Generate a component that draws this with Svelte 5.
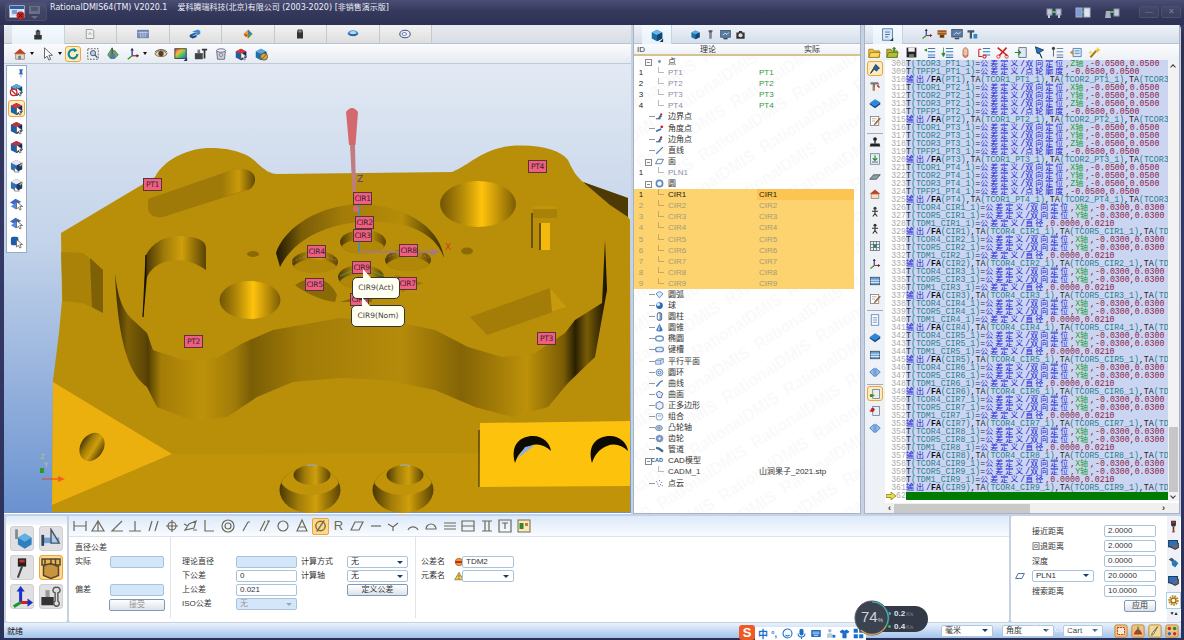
<script>
  // small 16x16 icon set, drawn by hand
  const cube = (a, b, c) =>
    `<path d="M2 5l6-3 6 3v7l-6 3-6-3z" fill="${b}"/><path d="M2 5l6 3 6-3-6-3z" fill="${a}"/><path d="M8 8v7l6-3V5z" fill="${c}"/>`;
  const cursor = `<path d="M8 6v8l2-2 1.500 3 1.500-.8-1.500-3h3z" fill="#fff" stroke="#555" stroke-width=".8"/>`;
  const blue = cube("#5aa9dc", "#1f6fa8", "#13466f");
  const icons = {
    tabProbe: `<rect x="5" y="2" width="6" height="6" fill="#555"/><path d="M3 8h10v6H3z" fill="#333"/><path d="M7 1h2v3H7z" fill="#222"/>`,
    tabDoc: `<path d="M3 2h8l2 2v10H3z" fill="#eee" stroke="#888"/><path d="M6 9l2-3 2 3" stroke="#999" fill="none"/>`,
    tabTable: `<rect x="1" y="3" width="14" height="10" fill="#7f94c4" stroke="#5468a0"/><path d="M5 5v8M8 5v8M11 5v8M1 6h14" stroke="#dfe6f5" stroke-width=".7"/>`,
    tabStack: `<path d="M1 9l7-3 3 1-7 4z" fill="#1c64b0"/><path d="M4 5l8-3 3 2v4l-5 2V6z" fill="#3c8ad0"/><path d="M1 9v3l4 2 5-2V9L5 11z" fill="#124a8a"/>`,
    tabColor: `<path d="M8 2l6 6-6 6-6-6z" fill="#e0a020"/><path d="M8 2l6 6-6 1z" fill="#2a7fd0"/><path d="M2 8l6 1-3 3z" fill="#d03a30"/><path d="M8 9l6-1-6 6z" fill="#40a040"/>`,
    tabDark: `<path d="M5 2h6l1 4v8H4V6z" fill="#333"/><rect x="6" y="3" width="4" height="3" fill="#888"/>`,
    tabDish: `<ellipse cx="8" cy="7" rx="7" ry="4" fill="#4a90d8"/><path d="M1 7c1 5 13 5 14 0-3 2-11 2-14 0z" fill="#2a5f9f"/><ellipse cx="8" cy="6" rx="4" ry="2" fill="#b8d8f0"/>`,
    tabRing: `<ellipse cx="8" cy="8" rx="7" ry="5" fill="#eef" stroke="#445a88" stroke-width="1.500"/><ellipse cx="7" cy="8" rx="3" ry="2" fill="#fff" stroke="#445a88"/>`,
    home: `<path d="M1 8l7-6 7 6z" fill="#c83c20"/><path d="M3 8h10v6H3z" fill="#eed9b8" stroke="#987"/><rect x="6" y="10" width="3" height="4" fill="#5a7fb0"/>`,
    arrow: `<path d="M4 1v12l3-2.500 2 4.500 2-1-2-4.500h4z" fill="#fff" stroke="#555"/>`,
    rotate: `<path d="M13 8a5 5 0 1 1-2-4" fill="none" stroke="#0e8a9a" stroke-width="2.500"/><path d="M9 1l4 3-4 2z" fill="#0e8a9a"/>`,
    zoomBox: `<rect x="2" y="2" width="12" height="12" fill="none" stroke="#555" stroke-dasharray="2 1.500"/><circle cx="8" cy="7" r="3" fill="#bcd" stroke="#456"/><path d="M10 9l3 3" stroke="#456" stroke-width="1.500"/>`,
    solidFit: `<path d="M7 1l1 3h2l4 5-4 4H5L2 9l3-5z" fill="#7aa060" stroke="#486"/><path d="M7 1v7" stroke="#333"/><rect x="5" y="8" width="5" height="5" fill="#4a78b8"/>`,
    axes: `<path d="M7 2v8" stroke="#2030c0" stroke-width="1.500"/><path d="M7 10h7" stroke="#d02020" stroke-width="1.500"/><path d="M7 10l-5 4" stroke="#20a020" stroke-width="1.500"/><path d="M7 1l-2 3h4zM15 10l-3-2v4z" fill="#333"/>`,
    eye: `<path d="M1 8c3-5 11-5 14 0-3 4-11 4-14 0z" fill="#e8d8b0" stroke="#664"/><circle cx="8" cy="7.500" r="3" fill="#5a3a20"/><path d="M1 6c3-4 11-4 14 0" stroke="#432" fill="none"/>`,
    palette: `<rect x="1" y="2" width="13" height="11" fill="url(#rainbow)" stroke="#333"/><path d="M15 16h-4l4-4z" fill="#135"/>`,
    camT: `<path d="M1 7h9v7H1z" fill="#444"/><path d="M4 3h3v4H4z" fill="#777"/><path d="M9 2h6v2h-2v9h-2V4H9z" fill="#333"/>`,
    bin: `<path d="M3 4h10l-1 10H4z" fill="#ccd" stroke="#667"/><ellipse cx="8" cy="4" rx="5" ry="2" fill="#eef" stroke="#667"/><circle cx="8" cy="9" r="2" fill="none" stroke="#889"/>`,
    cubeRed: cube("#e03030", "#1f5fa0", "#102a60") + cursor,
    cubeTool: cube("#5aa9dc", "#1f6fa8", "#13466f") + `<circle cx="11.500" cy="11" r="4" fill="#d0a840" stroke="#754"/><path d="M9 14l6-7" stroke="#754"/>`,
    noCube: blue + cursor + `<circle cx="5" cy="11" r="3.500" fill="#fff" stroke="#d02020" stroke-width="1.400"/><path d="M3 9l4 4" stroke="#d02020" stroke-width="1.400"/>`,
    cubeB: cube("#c03040", "#1f5fa0", "#102a60") + cursor,
    cubeW: cube("#e8e8f0", "#2f6fb8", "#1a3a70") + `<path d="M6 10v5h5l-2-2z" fill="#fff" stroke="#444" stroke-width=".6"/><path d="M11 8l3-3 1 1-3 3z" fill="#e0b040"/>`,
    plates: `<path d="M1 7l6-4 6 3-6 4z" fill="#3a6ac0"/><path d="M2 11l6-4 5 3-6 4z" fill="#5a88d8"/>` + cursor,
    cubeD: `<rect x="2" y="3" width="8" height="9" fill="#1a5ea8" rx="2"/>` + cursor,
    pin: `<path d="M5 2h6v1l-1 1v4l2 2H4l2-2V4L5 3zM7.500 10h1v5h-1z" fill="#2a6cb8"/>`,
    bigCube: `<path d="M2 5l6-3 6 3v7l-6 3-6-3z" fill="#1d6ea8"/><path d="M2 5l6 3 6-3-6-3z" fill="#6fb6e2"/><path d="M8 8v7l6-3V5z" fill="#0f4777"/><path d="M15 16h-4l4-4z" fill="#234"/>`,
    cubeS: blue,
    tool: `<path d="M4 2h8l-2 3v9H6V5z" fill="#889"/><rect x="6" y="2" width="4" height="3" fill="#555"/>`,
    screen: `<rect x="1" y="2" width="14" height="10" fill="#5a7aa8" stroke="#345"/><path d="M4 9l3-3 3 2 3-3" stroke="#fff" fill="none"/><path d="M5 14h6" stroke="#345" stroke-width="2"/>`,
    camera: `<path d="M2 5h3l1-2h4l1 2h3v9H2z" fill="#333"/><circle cx="8" cy="9" r="3" fill="#ddd"/>`,
    board: `<rect x="2" y="1" width="12" height="14" fill="#dfe8f5" stroke="#3a6ea8"/><path d="M5 5h6M5 8h6M5 11h4" stroke="#1f5fa0"/><path d="M15 16h-4l4-4z" fill="#135"/>`,
    chest: `<path d="M2 3h12v6H2z" fill="#a05a20"/><path d="M5 9h6v4H5z" fill="#6a3a14"/><path d="M2 6h12" stroke="#e0a040"/>`,
    tee: `<path d="M2 3h9v3H8v8H5V6H2z" fill="#456"/><rect x="10" y="8" width="5" height="6" fill="#2a8ac8"/>`,
    open: `<path d="M1 4h5l1 2h7v8H1z" fill="#f4c040" stroke="#a07810"/><path d="M3 8h12l-2 6H1z" fill="#fbd860" stroke="#a07810"/>`,
    openG: `<path d="M1 4h5l1 2h7v8H1z" fill="#c8b030" stroke="#7a6810"/><path d="M3 8h12l-2 6H1z" fill="#a8c040" stroke="#6a7810"/><path d="M10 1l3 3h-2v3H9V4H7z" fill="#3a8a2a"/>`,
    save: `<rect x="2" y="2" width="12" height="12" fill="#222"/><rect x="4" y="2" width="8" height="5" fill="#eee"/><rect x="5" y="10" width="6" height="4" fill="#777"/>`,
    listL: `<path d="M6 3h9M6 7h9M6 11h9M6 14h9" stroke="#3a78b8" stroke-width="1.300"/><path d="M1 5l4-2v4z" fill="#2a8a2a"/>`,
    listD: `<path d="M6 3h9M6 7h9M6 11h9M6 14h9" stroke="#3a78b8" stroke-width="1.300"/><path d="M3 2v9M1 9l2 4 2-4z" fill="#2a8a2a" stroke="#2a8a2a"/>`,
    hand: `<path d="M5 6c0-5 6-5 6 0v5c0 4-6 4-6 0z" fill="#f0c0a8" stroke="#a06040"/><path d="M5 11c1 2 5 2 6 0" stroke="#c04040" fill="none"/>`,
    listR: `<path d="M6 3h9M6 7h9M6 11h9" stroke="#3a78b8" stroke-width="1.300"/><path d="M1 4h3M1 4v9h4" stroke="#d02020" fill="none" stroke-width="1.300"/><circle cx="8" cy="13" r="2" fill="none" stroke="#d02020" stroke-width="1.300"/>`,
    cutX: `<path d="M2 2l12 10M13 2L4 12" stroke="#d02020" stroke-width="2"/><circle cx="3" cy="13" r="2" fill="none" stroke="#d02020"/><circle cx="13" cy="13" r="2" fill="none" stroke="#d02020"/>`,
    importBox: `<rect x="6" y="2" width="9" height="12" fill="#dfe8f5" stroke="#567"/><path d="M1 8h7M5 5l3 3-3 3" stroke="#2a8a2a" fill="none" stroke-width="1.500"/>`,
    flag: `<path d="M3 1l10 4-5 3 3 7-3-6-3 0z" fill="#2a70c8" stroke="#134"/>`,
    listG: `<path d="M7 3h8M7 7h8M7 11h8M7 14h8" stroke="#6a88a8" stroke-width="1.300"/><circle cx="3" cy="3" r="2" fill="#444"/><path d="M3 5v8" stroke="#444"/>`,
    layers: `<path d="M5 3h10v10H5z" fill="#dfe8f5" stroke="#3a78b8"/><path d="M7 6h6M7 9h6" stroke="#3a78b8"/><path d="M1 8l4-3v6z" fill="#e08020"/>`,
    wand: `<path d="M3 14l7-8" stroke="#a07810" stroke-width="2.500"/><path d="M12 1l1 3 3 1-3 1-1 3-1-3-3-1 3-1z" fill="#f4c020"/><path d="M3 5l1 2 2 1-2 1-1 2-1-2-2-1 2-1z" fill="#f8d860"/>`,
    pinB: `<path d="M9 2l5 5-2 1-2 3-3-3-5 6 4-7 1-2z" fill="#1c62b8" stroke="#123"/>`,
    hammer: `<path d="M2 3h10l2 3H8v8H5V6H2z" fill="#777"/><path d="M5 9h3v5H5z" fill="#c08040"/><path d="M11 7l3 3" stroke="#d02020" stroke-width="2"/>`,
    book: `<path d="M1 8l7-5 7 4-7 5z" fill="#2a88d8"/><path d="M1 8v2l7 5 7-5V7l-7 5z" fill="#134f90"/>`,
    note: `<rect x="2" y="2" width="11" height="12" fill="#fff" stroke="#777"/><path d="M4 5h6M4 8h4" stroke="#999"/><path d="M8 11l6-7 1 1-6 7-2 1z" fill="#e08020" stroke="#853"/>`,
    joy: `<circle cx="8" cy="4" r="2.500" fill="#222"/><path d="M7 5h2v5H7z" fill="#333"/><path d="M2 10h12l1 4H1z" fill="#222"/>`,
    dl: `<rect x="2" y="1" width="12" height="14" fill="#e8eef8" stroke="#678"/><path d="M8 3v7M5 7l3 3 3-3" stroke="#2a8a2a" fill="none" stroke-width="1.500"/><path d="M4 12h8" stroke="#345"/>`,
    plane: `<path d="M1 11l5-6h9l-5 6z" fill="#8aa0a0" stroke="#445"/>`,
    house: `<path d="M1 8l7-6 7 6z" fill="#c83c20"/><path d="M3 8h10v6H3z" fill="#f0e0c0" stroke="#976"/>`,
    walk: `<circle cx="8" cy="3" r="2" fill="#333"/><path d="M8 5v5l-3 4M8 10l3 4M4 7l8 0" stroke="#333" stroke-width="1.500" fill="none"/>`,
    grid: `<rect x="2" y="2" width="12" height="12" fill="#e8eef8" stroke="#567"/><path d="M2 6h12M2 10h12M6 2v12M10 2v12" stroke="#567"/><rect x="6" y="6" width="4" height="4" fill="#2a8a2a"/>`,
    stackB: `<rect x="2" y="3" width="12" height="10" fill="#6aa0d8" stroke="#345"/><path d="M2 7h12M2 10h12" stroke="#fff"/>`,
    pageB: `<rect x="3" y="1" width="10" height="14" fill="#fff" stroke="#4a78b8"/><path d="M5 5h6M5 8h6M5 11h6" stroke="#4a78b8"/>`,
    redPage: `<rect x="5" y="2" width="9" height="12" fill="#e8eef4" stroke="#678"/><path d="M1 8h5" stroke="#d02020" stroke-width="2"/><circle cx="5" cy="6" r="2.500" fill="#c02030"/>`,
    greenPage: `<rect x="5" y="2" width="9" height="12" fill="#e8eef4" stroke="#678"/><path d="M2 10h5" stroke="#2a8a2a" stroke-width="2"/><circle cx="3" cy="10" r="2" fill="#2a8a2a"/>`,
    mirror: `<path d="M7 3v11L1 8zM9 3v11l6-6z" fill="#9ab8e0" stroke="#2a70c8"/>`,
    probeTool: `<path d="M5 1h6v5l-1 2H6L5 6z" fill="#333"/><path d="M7 8h2v5H7z" fill="#444"/><circle cx="8" cy="14" r="1.500" fill="#d02020"/><rect x="6" y="2" width="4" height="2" fill="#d02020"/>`,
    axisBig: `<path d="M7 3v9" stroke="#1a30c8" stroke-width="2.200"/><path d="M7 12h7" stroke="#d02020" stroke-width="2.200"/><path d="M7 12l-5 3" stroke="#1a9a2a" stroke-width="2.200"/><path d="M7 0l-3 4h6zM16 12l-4-3v6z" fill="#1a30c8"/>`,
    squareTool: `<path d="M2 7h12v4H2z" fill="#6fa0d8"/><path d="M8 1l6 10H8z" fill="#b0cce8" stroke="#456"/><path d="M2 5v8" stroke="#345" stroke-width="2"/>`,
    toolCube: `<path d="M3 1h2v7H3z" fill="#888"/><path d="M5 7l5-3 5 3v5l-5 3-5-3z" fill="#2f7fc0"/><path d="M5 7l5 3 5-3-5-3z" fill="#60b0e0"/>`,
    boxBrown: `<path d="M2 2h12v4H2z" fill="#e8b850" stroke="#543"/><path d="M4 6l4-1 5 2v6l-5 2-5-2V7z" fill="#c89440" stroke="#543"/><path d="M4 2v4M8 2v4M11 2v4" stroke="#543"/>`,
    stylus: `<path d="M5 1h6v6H5z" fill="#222"/><rect x="6" y="2" width="4" height="2" fill="#c03030"/><path d="M8 7L5 15" stroke="#444" stroke-width="1.500"/>`,
    wrench: `<path d="M1 8h9v6H1z" fill="#333"/><path d="M4 3h3v5H4z" fill="#999"/><path d="M12 1a2 2 0 0 1 1 4v6a2 2 0 1 1-2 0V5a2 2 0 0 1 1-4z" fill="#ddd" stroke="#555"/>`,
    gear: `<circle cx="8" cy="8" r="5" fill="none" stroke="#c08a20" stroke-width="3" stroke-dasharray="2 1"/><circle cx="8" cy="8" r="3" fill="none" stroke="#a06810" stroke-width="1.500"/>`,
    monitor: `<rect x="2" y="3" width="11" height="8" fill="#2a6fc0" stroke="#123"/><path d="M4 11l6 3 4-2V6" fill="#667" stroke="#123"/>`,
    cfg: `<path d="M2 4l4-2 3 3-2 3z" fill="#456"/><path d="M6 7l4-2 4 4-4 5-4-3z" fill="#2a78b8"/>`,
    warn: `<path d="M8 2l7 12H1z" fill="#f0d040" stroke="#654"/><path d="M8 6v4M8 11v2" stroke="#333"/>`,
    noEntry: `<circle cx="8" cy="8" r="6" fill="#e8a020" stroke="#854"/><path d="M2 8h12" stroke="#c02020" stroke-width="3"/>`,
    netA: `<rect x="1" y="4" width="5" height="6" fill="#c4cadc" stroke="#8f96ae"/><rect x="10" y="4" width="5" height="6" fill="#c4cadc" stroke="#8f96ae"/><path d="M6 7h4" stroke="#4cc04c" stroke-width="2"/><path d="M3 10v3M13 10v3" stroke="#c4cadc" stroke-width="2"/>`,
    netB: `<rect x="1" y="3" width="6" height="9" fill="#7f9ad8" stroke="#a8b2cc"/><rect x="9" y="3" width="6" height="9" fill="#dfe6f2" stroke="#a8b2cc"/><path d="M7 7h2" stroke="#4cc04c" stroke-width="2"/>`,
    netC: `<path d="M2 6h4l1 7H1z" fill="#aab0c0"/><rect x="10" y="4" width="5" height="7" fill="#c4cadc" stroke="#8f96ae"/><path d="M6 7h4" stroke="#4cc04c" stroke-width="2"/>`,
    stA: `<rect x="1" y="1" width="14" height="14" rx="2" fill="#f0c080" stroke="#b8862a"/><rect x="4" y="4" width="8" height="8" fill="#f8e8d0" stroke="#c02020" stroke-dasharray="2 1"/>`,
    stB: `<rect x="1" y="1" width="14" height="14" rx="2" fill="#f0c080" stroke="#b8862a"/><path d="M3 12c3-8 7-8 10 0z" fill="#c03030"/><path d="M8 3v9" stroke="#2a8a2a" stroke-width="1.500"/>`,
    stC: `<rect x="1" y="1" width="14" height="14" rx="2" fill="#f4d898" stroke="#b8862a"/><path d="M11 3L6 12l-2 1 1-3z" fill="#fff" stroke="#654"/>`,
    stD: `<rect x="1" y="1" width="14" height="14" rx="2" fill="#f0c080" stroke="#b8862a"/><circle cx="5" cy="5" r="2" fill="#c03030"/><circle cx="11" cy="5" r="2" fill="#2a8a2a"/><circle cx="5" cy="11" r="2" fill="#2a70c8"/><circle cx="11" cy="11" r="2" fill="#c03030"/>`
  };

  // tree icons, same viewBox
  const t = {
    pt: `<circle cx="8" cy="8" r="2.500" fill="#6f8fb8"/>`,
    edge: `<path d="M2 12h8" stroke="#555" stroke-width="2"/><path d="M5 12l4-7 4 2-5 5z" fill="#2a6cb8"/><circle cx="11" cy="4" r="2" fill="#c02020"/>`,
    angle: `<path d="M2 13l9-4" stroke="#2a6cb8" stroke-width="3"/><circle cx="12" cy="5" r="2.500" fill="#d02020"/>`,
    line: `<path d="M2 14L14 2" stroke="#4a80c0" stroke-width="2.500"/>`,
    plane: `<path d="M1 12l4-8h10l-4 8z" fill="#fff" stroke="#3a5f98" stroke-width="1.400"/>`,
    circle: `<circle cx="8" cy="8" r="5.500" fill="#fff" stroke="#5f8ac0" stroke-width="3"/>`,
    arc: `<path d="M2 7c3-5 9-5 12 0l-6 7z" fill="#dfe9f8" stroke="#4a80c0" stroke-width="1.500"/>`,
    sphere: `<circle cx="8" cy="8" r="6" fill="#2a6cb8"/><circle cx="6" cy="6" r="3" fill="#dfeaf8"/>`,
    cyl: `<rect x="4" y="1" width="8" height="14" rx="3" fill="#6a9ad0" stroke="#345"/><rect x="5" y="3" width="3" height="10" fill="#fff"/>`,
    cone: `<path d="M8 1l6 12c-3 3-9 3-12 0z" fill="#3a78c0"/><path d="M8 3L5 13h3z" fill="#dfeaf8"/>`,
    ell: `<ellipse cx="8" cy="8" rx="7" ry="4.500" fill="#fff" stroke="#6a94c8" stroke-width="2.500"/>`,
    slot: `<rect x="1" y="4" width="14" height="8" rx="4" fill="#dfe8f5" stroke="#5f88b8" stroke-width="2"/>`,
    par: `<path d="M1 6l5-3h9v7l-5 3H1z" fill="#cfe0f4" stroke="#4a74a8"/><path d="M1 6h9v7M10 6l5-3" stroke="#4a74a8" fill="none"/>`,
    ring: `<circle cx="8" cy="8" r="6" fill="#dfe8f5" stroke="#6088b8" stroke-width="1.500"/><circle cx="8" cy="8" r="2.500" fill="#fff" stroke="#3a62a0" stroke-width="1.500"/>`,
    curve: `<path d="M2 13c4 0 3-8 12-10" stroke="#4a78b0" stroke-width="2.500" fill="none"/>`,
    surf: `<path d="M2 6l5-4 7 4-3 8-6-1z" fill="#dfe8f5" stroke="#3a62a0" stroke-width="1.500"/>`,
    poly: `<path d="M8 1l6 3v8l-6 3-6-3V4z" fill="#eef" stroke="#6a8cb8" stroke-width="2"/>`,
    combo: `<path d="M3 3h9l2 5-3 6H4L2 9zM5 7h6" fill="#fff" stroke="#5a8ab8" stroke-width="1.400"/>`,
    cam: `<ellipse cx="7" cy="9" rx="6" ry="4.500" fill="#c8daf0" stroke="#4a78b0" stroke-width="1.500"/><ellipse cx="7" cy="9" rx="2.500" ry="1.500" fill="#fff" stroke="#345"/>`,
    gear: `<circle cx="8" cy="8" r="6" fill="#7a9cc8" stroke="#345" stroke-dasharray="2 1"/><circle cx="8" cy="8" r="2" fill="#fff"/>`,
    pipe: `<path d="M2 5c6 0 8 3 12 7" stroke="#3a6898" stroke-width="4" fill="none"/>`,
    cloud: `<path d="M3 5h.1M8 3h.1M12 6h.1M5 9h.1M10 10h.1M7 13h.1M13 12h.1" stroke="#335" stroke-width="1.500" stroke-linecap="round"/>`
  };

  const mk = (k, id, n, a, ic) => ({ k, id, n, a, ic });
  const rows = [
    mk("group", "", "点", "", "pt"),
    ...[1, 2, 3, 4].map((i) => mk("leaf", i, "PT" + i, "PT" + i)),
    mk("feat", "", "边界点", "", "edge"),
    mk("feat", "", "角度点", "", "angle"),
    mk("feat", "", "边角点", "", "edge"),
    mk("feat", "", "直线", "", "line"),
    mk("group", "", "面", "", "plane"),
    mk("leaf", 1, "PLN1", ""),
    mk("group", "", "圆", "", "circle"),
    ...[1, 2, 3, 4, 5, 6, 7, 8, 9].map((i) => mk("picked", i, "CIR" + i, "CIR" + i)),
    ...[
      ["圆弧", "arc"], ["球", "sphere"], ["圆柱", "cyl"], ["圆锥", "cone"], ["椭圆", "ell"],
      ["键槽", "slot"], ["平行平面", "par"], ["圆环", "ring"], ["曲线", "curve"], ["曲面", "surf"],
      ["正多边形", "poly"], ["组合", "combo"], ["凸轮轴", "cam"], ["齿轮", "gear"], ["管道", "pipe"]
    ].map(([n, ic]) => mk("feat", "", n, "", ic)),
    mk("cad", "", "CAD模型", ""),
    mk("leaf", "", "CADM_1", "山涧果子_2021.stp"),
    mk("feat", "", "点云", "", "cloud")
  ];

  // program listing, lines 308..361
  const tolLine = (tag, feat, text, lo, hi, ax) => [
    ["k", "T"], ["t", `(${tag}_${feat}_1)`], ["k", "="], ["c", "公差定义"], ["s", "/"], ["c", text],
    ...(ax ? [["n", ","], ["a", ax], ["c2", "轴"]] : []),
    ["n", `,-${lo},${hi}`.replace("-0.0000", "0.0000")]
  ];
  const outLine = (feat, tags) => [
    ["c", "输出"], ["s", "/"], ["b", "FA"], ["t", `(${feat})`], ["k", ","],
    ...tags.flatMap((g, i) => [["k", "TA"], ["t", `(${g}_${feat}_1)`], ["k", i < tags.length - 1 ? "," : ""]]),
    ["k", ",TA"], ["t", tags[0] === "TCOR1" ? "(TCOR3_" : "(TD"]
  ];
  const code = [];
  code.push(tolLine("TCOR3", "PT1", "双向定位", "0.0500", "0.0500", "Z"));
  code.push(tolLine("TPFP1", "PT1", "点轮廓度", "0.0500", "0.0500"));
  code.push(outLine("PT1", ["TCOR1", "TCOR2"]));
  for (const p of ["PT2", "PT3", "PT4"]) {
    code.push(tolLine("TCOR1", p, "双向定位", "0.0500", "0.0500", "X"));
    code.push(tolLine("TCOR2", p, "双向定位", "0.0500", "0.0500", "Y"));
    code.push(tolLine("TCOR3", p, "双向定位", "0.0500", "0.0500", "Z"));
    code.push(tolLine("TPFP1", p, "点轮廓度", "0.0500", "0.0500"));
    code.push(outLine(p, ["TCOR1", "TCOR2"]));
  }
  for (let i = 1; i <= 9; i++) {
    const c = "CIR" + i;
    code.push(tolLine("TCOR4", c, "双向定位", "0.0300", "0.0300", "X"));
    code.push(tolLine("TCOR5", c, "双向定位", "0.0300", "0.0300", "Y"));
    code.push(tolLine("TDM1", c, "直径", "0.0000", "0.0210"));
    code.push(outLine(c, ["TCOR4", "TCOR5"]));
  }

  const leftTabs = ["tabProbe", "tabDoc", "tabTable", "tabStack", "tabColor", "tabDark", "tabDish", "tabRing"];
  const viewTools = [
    ["home", 1], ["arrow", 1], ["rotate", 0, true], ["zoomBox"], ["solidFit"], ["axes", 1],
    ["eye"], ["palette"], ["camT"], ["bin"], ["cubeRed"], ["cubeTool"]
  ];
  const pickTools = ["noCube", "cubeRed", "cubeB", "cubeB", "cubeW", "cubeW", "plates", "plates", "cubeD"];
  const codeTools = ["open", "openG", "save", "listL", "listD", "hand", "listR", "cutX", "importBox", "flag", "listG", "layers", "wand"];
  const strip = [
    ["pinB", true], ["hammer"], ["book"], ["note"], "-",
    ["joy"], ["dl"], ["plane"], ["house"], ["walk"], ["walk"], ["grid"], ["axes"], ["stackB"], ["note"], "-",
    ["pageB"], ["book"], ["stackB"], ["mirror"], "-",
    ["greenPage", true], ["redPage"], ["mirror"]
  ];

  // GD&T buttons along the tolerance bar
  const gdt = [
    "M2 3v10M14 3v10M2 8h12", "M8 3L2 13h12zM8 3v10", "M13 3L3 13h11", "M8 3v10M2 13h12", "M6 3L3 13M12 3L9 13",
    "M8 2v12M2 8h12M12 8a4 4 0 1 1-8 0 4 4 0 1 1 8 0", "M2 12L6 6l7-3-2 7zM1 6l4 2M10 12l4 0", "M4 2v11h9M9 7h.1M13 9h.1",
    "M14 8a6 6 0 1 1-12 0 6 6 0 1 1 12 0M11 8a3 3 0 1 1-6 0 3 3 0 1 1 6 0", "M5 13l5-9M10 4h2", "M3 13l5-10M7 13l5-10M10 3h3",
    "M13 8a5 5 0 1 1-10 0 5 5 0 1 1 10 0", "M8 2L3 13h10zM5 9h6", "Ø", "R", "M2 12L6 4h8l-4 8z", "M3 8h10", "M2 6l5 3 5-4M7 9v4",
    "M3 12a5.500 5.500 0 0 1 10 0", "M3 11a5 5 0 0 1 10 0z", "M2 5h12M2 8h12M2 11h12", "M2 3h12v10H2zM2 8h12", "M3 3h10M3 13h10M6 3v10M10 3v10",
    "M2 2h12v12H2zM5 5h6M8 5v6", "box"
  ];

  const holes = [
    { cx: 363, cy: 242, rx: 23, ry: 12 },
    { cx: 315, cy: 262, rx: 23, ry: 11 },
    { cx: 408, cy: 260, rx: 23, ry: 11 },
    { cx: 361, cy: 277, rx: 23, ry: 12 }
  ];
  const bores = [310, 403];

  const tags = [
    ["PT1", 143, 178], ["PT2", 184, 335], ["PT3", 537, 332], ["PT4", 528, 160],
    ["CIR1", 353, 192], ["CIR2", 355, 216], ["CIR3", 353, 229], ["CIR4", 307, 245],
    ["CIR8", 399, 244], ["CIR9", 352, 261], ["CIR5", 305, 278], ["CIR7", 398, 277], ["CIR6", 350, 293]
  ];
</script>

{#snippet ic(name, size = 14, set = icons)}
  <svg class="ic" width={size} height={size} viewBox="0 0 16 16">{@html set[name]}</svg>
{/snippet}

<svg class="defs" width="0" height="0">
  <defs>
    <linearGradient id="rainbow" x1="0" y1="0" x2="1" y2="1">
      <stop offset="0" stop-color="#e03060" /><stop offset=".35" stop-color="#f0c030" />
      <stop offset=".65" stop-color="#40c070" /><stop offset="1" stop-color="#4060d0" />
    </linearGradient>
  </defs>
</svg>

<div class="app">
  <header class="titlebar">
    <div class="quick">
      <svg width="16" height="16" viewBox="0 0 16 16">
        <rect x="1" y="2" width="14" height="11" fill="#cfe0f4" stroke="#fff" />
        <rect x="1" y="2" width="14" height="3" fill="#2a5fa8" />
        <path d="M3 7h5M3 9h5" stroke="#2a5fa8" />
        <circle cx="11.500" cy="11.500" r="4" fill="#d02020" />
        <path d="M9.500 9.500l4 4M13.500 9.500l-4 4" stroke="#111" />
      </svg>
      <svg width="13" height="14" viewBox="0 0 13 14">
        <path d="M1 1h11v8H1z" fill="#6a7088" />
        <path d="M3 3h7M3 5h7" stroke="#333a55" />
        <path d="M3 11h7l-3.500 3z" fill="#6a7088" />
      </svg>
    </div>
    <div class="title">RationalDMIS64(TM) V2020.1<span class="gap"></span>爱科腾瑞科技(北京)有限公司 (2003-2020) [非销售演示版]</div>
    <div class="head-right">
      {@render ic("netA", 16)}
      {@render ic("netB", 16)}
      {@render ic("netC", 16)}
      <div class="winbtns"><span>—</span><span>✕</span></div>
    </div>
  </header>

  <div class="client">
    <div class="panes">
      <section class="pane view-pane">
        <nav class="tabs wide">
          {#each leftTabs as tab, i}
            <div class="tab" class:on={i === 0}>{@render ic(tab, 12)}</div>
          {/each}
        </nav>
        <div class="view-tools">
          {#each viewTools as [name, drop, on]}
            <span class="vt" class:on>{@render ic(name, 14)}</span>
            {#if drop}<i class="caret"></i>{/if}
          {/each}
        </div>
        <div class="viewport">
          <svg class="scene" width="627" height="449" viewBox="4 64 627 449">
            <defs>
              <linearGradient id="sky" x1="0" y1="0" x2="0" y2="1">
                <stop offset="0" stop-color="#e2e9f3" /><stop offset=".4" stop-color="#c3d3ea" />
                <stop offset="1" stop-color="#6a92d0" />
              </linearGradient>
              <linearGradient id="wall" gradientUnits="userSpaceOnUse" x1="147" y1="0" x2="610" y2="0">
                <stop offset="0" stop-color="#4d3a04" /><stop offset=".03" stop-color="#a47d07" />
                <stop offset=".12" stop-color="#bd9109" /><stop offset=".19" stop-color="#a07b08" />
                <stop offset=".225" stop-color="#7a5d06" /><stop offset=".33" stop-color="#a17b08" />
                <stop offset=".55" stop-color="#b58b0a" /><stop offset=".68" stop-color="#846406" />
                <stop offset=".82" stop-color="#bd9109" /><stop offset=".9" stop-color="#7a5c05" />
                <stop offset=".925" stop-color="#2a2002" /><stop offset=".95" stop-color="#7a5c06" />
                <stop offset="1" stop-color="#060400" />
              </linearGradient>
              <linearGradient id="cone" x1="0" y1="0" x2="1" y2="0">
                <stop offset="0" stop-color="#6f5405" /><stop offset=".3" stop-color="#b68c08" />
                <stop offset=".55" stop-color="#ffc30c" /><stop offset=".8" stop-color="#b88c08" />
                <stop offset="1" stop-color="#7a5c06" />
              </linearGradient>
              <linearGradient id="hole" x1="0" y1="0" x2="1" y2="0">
                <stop offset="0" stop-color="#4a3804" /><stop offset=".3" stop-color="#a07b08" />
                <stop offset=".6" stop-color="#cf9f0b" /><stop offset="1" stop-color="#594304" />
              </linearGradient>
              <linearGradient id="slotEnd" gradientUnits="userSpaceOnUse" x1="222" y1="0" x2="256" y2="0">
                <stop offset="0" stop-color="#9f7a08" /><stop offset=".5" stop-color="#c99a0b" />
                <stop offset="1" stop-color="#5a4404" />
              </linearGradient>
              <linearGradient id="pocket" gradientUnits="userSpaceOnUse" x1="276" y1="0" x2="444" y2="0">
                <stop offset="0" stop-color="#201802" /><stop offset=".15" stop-color="#7a5d06" />
                <stop offset=".4" stop-color="#a27c08" /><stop offset=".75" stop-color="#b68c08" />
                <stop offset="1" stop-color="#3a2c03" />
              </linearGradient>
              <linearGradient id="sideDark" gradientUnits="userSpaceOnUse" x1="115" y1="0" x2="147" y2="0">
                <stop offset="0" stop-color="#3a2c03" /><stop offset=".4" stop-color="#7d5f06" />
                <stop offset="1" stop-color="#5a4404" />
              </linearGradient>
              {#each holes as h, i}
                <clipPath id="clip{i}"><ellipse cx={h.cx} cy={h.cy} rx={h.rx} ry={h.ry} /></clipPath>
              {/each}
              {#each bores as b, i}
                <clipPath id="bore{i}"><ellipse cx={b} cy="490" rx="30.500" ry="23" /></clipPath>
              {/each}
            </defs>
            <rect x="4" y="64" width="627" height="449" fill="url(#sky)" />
            <path d="M52 512L53 380L56 357L59 333L62 300L61 233L155 177C165 158 190 148 210 148C235 148 250 155 257 163C265 170 270 174 277 174L452 172C470 165 480 150 510 146C540 144 560 150 568 160C572 168 574 174 583 182L628 198V217L630 220V512Z" fill="#b98e09" />
            <path d="M583 182L628 198V217L610 205Z" fill="#4d3a05" />
            <path d="M172 454L630 452V512H52V505Z" fill="#c09309" />
            <path d="M53 382L172 454L52 505Z" fill="#ebb00d" />
            <ellipse cx="92" cy="447" rx="11.500" ry="15" transform="rotate(32 92 447)" fill="url(#hole)" />

            <!-- front wall -->
            <path d="M147 333L153 350L183 360L217 358L243 343L273 330L340 318L402 323L435 330L468 347L502 357L535 353L565 333L575 320L602 303L605 240L607 290L595 357L568 383L548 407L512 417L475 407L435 390L385 380L340 378L293 382L257 397L227 417L193 421L157 407L147 387Z" fill="url(#wall)" />
            <path d="M115 273C118 300 124 312 133 320L147 333V387C130 375 118 345 115 273Z" fill="url(#sideDark)" />
            <path d="M61 252L83 253L103 270V313L83 303L63 301Z" fill="#a98207" />
            <path d="M90 258L103 270V313L92 307Z" fill="#7e6006" />

            <!-- slot, top left -->
            <path d="M148 199L232 170C248 167 256 172 255 181C254 186 250 190 247 190L163 217C152 219 147 212 148 205Z" fill="#9f7a08" />
            <path d="M222 174L232 170C248 167 256 172 255 181C254 186 250 190 247 190L222 197Z" fill="url(#slotEnd)" />
            <path d="M146 255C152 243 165 236 178 236C196 236 206 240 206 248V270C192 260 180 259 168 261C152 265 147 275 146 282Z" fill="url(#hole)" />
            <path d="M146 255L143 317L146 282Z" fill="#110d01" stroke="#110d01" stroke-width=".8" />
            <ellipse cx="253" cy="254" rx="6" ry="3" fill="#8a6a07" />
            <ellipse cx="467" cy="251" rx="6" ry="3.500" fill="#8a6a07" />
            <ellipse cx="250" cy="300" rx="30.500" ry="19" fill="url(#cone)" />
            <ellipse cx="478" cy="204" rx="38" ry="23" fill="url(#cone)" />

            <!-- central pocket -->
            <path d="M276 253C283 232 310 208 355 204C400 203 440 225 444 258C438 240 420 225 385 222C350 219 300 228 280 267Z" fill="url(#pocket)" />
            {#each holes as h, i}
              <ellipse cx={h.cx} cy={h.cy} rx={h.rx} ry={h.ry} fill="url(#hole)" />
              <ellipse cx={h.cx} cy={h.cy + h.ry * 0.75} rx={h.rx} ry={h.ry} fill="#b18707" clip-path="url(#clip{i})" />
            {/each}
            <path d="M295 285C315 272 330 280 337 295L335 302C320 300 305 293 295 285Z" fill="#8a6a07" />
            <path d="M395 275L423 283L402 292Z" fill="#9d7807" />
            <path d="M340 302L372 292V302Z" fill="#8a6a07" />

            <!-- recess and the small slot on the right -->
            <path d="M470 317L550 288L567 307L487 335Z" fill="#a47d08" />
            <path d="M550 288L567 307L552 312Z" fill="#c79a0b" />
            <path d="M533 207H557V218H533Z" fill="#a88108" />
            <path d="M533 207C540 205 550 205 557 207V209H533Z" fill="#c49509" />
            <rect x="541" y="223" width="9" height="27" fill="#f3b90d" />
            <path d="M532 213V248M540 223V250" stroke="#1a1402" />

            <!-- yellow face with crescents -->
            <path d="M480 423L630 421V486L479 487Z" fill="#fdc20c" />
            <path d="M479 430V487" stroke="#2a2002" />
            {#each [0, 77] as dx}
              <path transform="translate({dx} 0)" d="M515 463C510 445 520 436 533 436C543 436 550 443 551 451C545 445 537 443 530 446C522 449 517 456 515 463Z" fill="#0c0a02" />
            {/each}
            <path d="M517 459L535 445L525 447Z" fill="#8fb0dc" />

            <!-- counterbores along the bottom -->
            {#each bores as b, i}
              <ellipse cx={b} cy="490" rx="30.500" ry="23" fill="url(#hole)" />
              <ellipse cx={b} cy="478" rx="30" ry="17" fill="#c09309" clip-path="url(#bore{i})" />
              <ellipse cx={b + 2} cy="475" rx="18.500" ry="10" fill="url(#hole)" />
              <path d="M{b - 3} 465.500Q{b + 2} 464 {b + 7} 465.500" stroke="#8fb0dc" fill="none" />
            {/each}

            <!-- probe and axes -->
            <path d="M346 112Q352 104 358 112L355.500 145H349Z" fill="#d3696f" />
            <path d="M350 145L352.500 192H356L355 145Z" fill="#bf7d82" />
            <path d="M359 196V252" stroke="#4f8fa0" stroke-width="2" />
            <path d="M359 252H434" stroke="#a57a7a" stroke-width="2" />
            <path d="M431 248L440 252L431 256Z" fill="#a57a7a" />
            <circle cx="356" cy="209" r="3" fill="#d3696f" />
            <text class="ax" x="357" y="182" fill="#4040a0">Z</text>
            <text class="ax" x="445" y="250" fill="#d04020">X</text>
            <path d="M292 262Q315 250 340 262M385 258Q408 248 430 258" stroke="#c08a90" stroke-width=".6" fill="none" stroke-dasharray="2 2" />
            <path d="M340 276Q360 264 384 276" stroke="#50b060" stroke-width=".7" fill="none" />

            <!-- little triad -->
            <path d="M42 479H60" stroke="#e84020" />
            <path d="M58 476L65 479L58 482Z" fill="#f06020" />
            <rect x="40" y="468" width="4" height="5" fill="#20a020" />
            <text class="tri" x="40" y="459" fill="#b8c080">Z</text>
            <text class="tri" x="44" y="467" fill="#c0c890">Y</text>
          </svg>

          {#each tags as [label, x, y]}
            <div class="tag" style="left:{x - 4}px;top:{y - 64}px">{label}</div>
          {/each}
          <div class="tip" style="left:348px;top:213px"><i></i>CIR9(Act)</div>
          <div class="tip wide-tip" style="left:347px;top:241px"><i></i>CIR9(Nom)</div>

          <div class="pick">
            <div class="pick-pin">{@render ic("pin", 10)}</div>
            {#each pickTools as name, i}
              <span class="pt" class:on={i === 1}>{@render ic(name, 15)}</span>
            {/each}
          </div>
        </div>
      </section>

      <section class="pane tree-pane">
        <nav class="tabs">
          <div class="tab on mid">{@render ic("bigCube", 14)}</div>
          <div class="tab-icons">
            {@render ic("cubeS", 11)}
            {@render ic("tool", 11)}
            {@render ic("screen", 11)}
            {@render ic("camera", 11)}
          </div>
        </nav>
        <div class="tree-head"><span class="h-id">ID</span><span class="h-th">理论</span><span class="h-ac">实际</span></div>
        <div class="tree">
          <svg class="wm" width="228" height="460">
            <defs>
              <pattern id="marks" width="112" height="54" patternUnits="userSpaceOnUse" patternTransform="rotate(-33)">
                <text x="0" y="18" class="wm-t">RationalDMIS</text>
                <text x="-56" y="45" class="wm-t">RationalDMIS</text>
                <text x="56" y="45" class="wm-t">RationalDMIS</text>
              </pattern>
            </defs>
            <rect width="228" height="460" fill="url(#marks)" />
          </svg>
          {#each rows as r, i}
            <div class="row {r.k}" class:cur={i === 12}>
              <span class="id">{r.id}</span>
              <span class="glyph">
                {#if r.k === "group" || r.k === "cad"}
                  <b class="box"></b>
                  {#if r.k === "cad"}<em class="cadmark">CAD</em>{:else}{@render ic(r.ic, 9, t)}{/if}
                {:else if r.k === "feat"}
                  <b class="dash"></b>{@render ic(r.ic, 9, t)}
                {:else}
                  <b class="ell"></b>
                {/if}
              </span>
              <span class="nm">{r.n}</span>
              <span class="ac">{r.a}</span>
            </div>
          {/each}
        </div>
      </section>

      <section class="pane code-pane">
        <nav class="tabs">
          <div class="tab on mid2">{@render ic("board", 13)}</div>
          <div class="tab-icons b2">
            {@render ic("axes", 12)}
            {@render ic("chest", 12)}
            {@render ic("screen", 12)}
            {@render ic("tee", 12)}
          </div>
        </nav>
        <div class="code-tools">
          {#each codeTools as name}{@render ic(name, 13)}{/each}
        </div>
        <div class="code-body">
          <div class="strip">
            {#each strip as s}
              {#if s === "-"}<hr />{:else}<span class="st" class:on={s[1]}>{@render ic(s[0], 12)}</span>{/if}
            {/each}
          </div>
          <div class="code-main">
            <div class="code-view">
              <div class="nums">
                {#each code as _, i}<div>{308 + i}</div>{/each}
                <div class="last"><svg width="11" height="8" viewBox="0 0 11 8"><path d="M0 2.500h5V0l5 4-5 4V5.500H0z" fill="#f0e020" stroke="#554" stroke-width=".6" /></svg>62</div>
              </div>
              <div class="lines">
                {#each code as parts}
                  <div class="ln">{#each parts as [c, txt]}<span class={c}>{txt}</span>{/each}</div>
                {/each}
                <div class="ln cursor-line"></div>
              </div>
              <div class="vbar"><span class="up"></span><span class="thumb"></span><span class="dn"></span></div>
            </div>
            <div class="hbar"><span class="lt">‹</span><span class="hthumb"></span><span class="rt">›</span></div>
          </div>
        </div>
      </section>
    </div>

    <div class="lower">
      <div class="mode-panel">
        <div class="mode-grid">
          <span class="mb">{@render ic("toolCube", 22)}</span>
          <span class="mb">{@render ic("squareTool", 22)}</span>
          <span class="mb">{@render ic("stylus", 22)}</span>
          <span class="mb on">{@render ic("boxBrown", 24)}</span>
          <span class="mb">{@render ic("axisBig", 22)}</span>
          <span class="mb">{@render ic("wrench", 22)}</span>
        </div>
      </div>

      <div class="tol-panel">
        <div class="gdt-bar">
          {#each gdt as d}
            <span class="g" class:on={d === "Ø"}>
              {#if d === "Ø"}
                <svg width="16" height="16" viewBox="0 0 16 16"><circle cx="8" cy="8" r="5" fill="none" stroke="#7a6a40" stroke-width="1.500" /><path d="M4 14L12 2" stroke="#7a6a40" stroke-width="1.500" /></svg>
              {:else if d === "R"}
                <span class="r-sym">R</span>
              {:else if d === "box"}
                <svg width="16" height="16" viewBox="0 0 16 16"><rect x="2" y="2" width="12" height="12" fill="#f8e8c0" stroke="#7a6a40" /><rect x="3.500" y="5" width="4" height="6" fill="#2a8a2a" /><rect x="9" y="5" width="3" height="3" fill="#c08030" /></svg>
              {:else}
                <svg width="16" height="16" viewBox="0 0 16 16"><path {d} fill="none" stroke="#6c6a58" stroke-width="1.200" /></svg>
              {/if}
            </span>
          {/each}
        </div>
        <div class="tol-form">
          <div class="sec sec-a">
            <span class="lb wide">直径公差</span>
            <span class="lb">实际</span><span class="fld blue"></span>
            <span class="spacer"></span>
            <span class="lb">偏差</span><span class="fld blue"></span>
            <span class="btn off accept">接受</span>
          </div>
          <div class="sec sec-b">
            <span class="lb">理论直径</span><span class="fld blue"></span>
            <span class="lb">计算方式</span><span class="fld sel">无<i class="dd"></i></span>

            <span class="lb">下公差</span><span class="fld">0</span>
            <span class="lb">计算轴</span><span class="fld sel">无<i class="dd"></i></span>

            <span class="lb">上公差</span><span class="fld">0.021</span>
            <span></span><span class="btn">定义公差</span>

            <span class="lb">ISO公差</span><span class="fld blue sel dim">无<i class="dd grey"></i></span>
          </div>
          <div class="sec sec-c">
            <span class="lb">公差名</span>{@render ic("noEntry", 10)}<span class="fld">TDM2</span>
            <span class="lb">元素名</span>{@render ic("warn", 10)}<span class="fld sel"><i class="dd"></i></span>
          </div>
        </div>
      </div>

      <div class="probe-panel">
        <div class="probe-form">
          <span></span><span class="lb">接近距离</span><span class="fld">2.0000</span>
          <span></span><span class="lb">回退距离</span><span class="fld">2.0000</span>
          <span></span><span class="lb">深度</span><span class="fld">0.0000</span>
          {@render ic("plane", 10, t)}<span class="fld sel small">PLN1<i class="dd"></i></span><span class="fld">20.0000</span>
          <span></span><span class="lb">搜索距离</span><span class="fld">10.0000</span>
          <span></span><span></span><span class="btn apply">应用</span>
        </div>
        <div class="probe-side">
          {@render ic("probeTool", 13)}
          {@render ic("monitor", 13)}
          {@render ic("cfg", 13)}
          {@render ic("monitor", 13)}
          <span class="side-on">{@render ic("gear", 13)}</span>
          <span class="mini">▼▲</span>
        </div>
      </div>
    </div>

    <footer class="status">
      <span class="ready">就绪</span>
      <div class="st-right">
        <span class="fld sel unit">毫米<i class="dd"></i></span>
        <span class="fld sel unit">角度<i class="dd"></i></span>
        <span class="fld sel unit short">Cart<i class="dd"></i></span>
        <span class="st-icons">
          {@render ic("stA", 14)}
          {@render ic("stB", 14)}
          {@render ic("stC", 14)}
          {@render ic("stD", 14)}
        </span>
      </div>
    </footer>
  </div>

  <!-- things that float over the window: csdn mark, IME bar, net meter -->
  <div class="csdn">ps://blog.csdn.net/we</div>
  <div class="ime">
    <span class="sogou">S</span>
    <span class="zh">中</span>
    <span class="pn">°,</span>
    <svg width="11" height="11" viewBox="0 0 16 16"><circle cx="8" cy="8" r="6.500" fill="#fff" stroke="#1c6fc8" stroke-width="1.600" /><path d="M5 10q3 3 6 0M5.500 6h.1M10.500 6h.1" stroke="#1c6fc8" stroke-width="1.600" fill="none" /></svg>
    <svg width="11" height="11" viewBox="0 0 16 16"><rect x="5" y="1" width="6" height="10" rx="3" fill="#1c6fc8" /><path d="M3 8a5 5 0 0 0 10 0M8 13v3" stroke="#1c6fc8" fill="none" stroke-width="1.500" /></svg>
    <svg width="12" height="11" viewBox="0 0 16 16"><rect x="1" y="3" width="14" height="10" rx="1" fill="#1c6fc8" /><path d="M3 6h10M3 8.500h10M5 11h6" stroke="#fff" /></svg>
    <svg width="11" height="11" viewBox="0 0 16 16"><circle cx="7" cy="4" r="2.500" fill="#9ab8d8" /><path d="M3 14V9c0-2 8-2 8 0v5z" fill="#b8cce0" /><path d="M11 10h4v4h-4z" fill="#1c6fc8" /></svg>
    <svg width="11" height="11" viewBox="0 0 16 16"><path d="M5 2L1 5l2 3 2-1v8h6V7l2 1 2-3-4-3-3 2z" fill="#1c6fc8" /></svg>
    <svg width="11" height="11" viewBox="0 0 16 16"><path d="M1 1h6v6H1zM9 1h6v6H9zM1 9h6v6H1zM9 9h6v6H9z" fill="#1c6fc8" /></svg>
  </div>
  <div class="meter">
    <div class="pill">
      <div><i class="up-dot"></i><b>0.2</b><small>K/s</small></div>
      <div><i class="dn-dot"></i><b>0.4</b><small>K/s</small></div>
    </div>
    <div class="dial">
      <svg width="36" height="36" viewBox="0 0 36 36">
        <circle cx="18" cy="18" r="17" fill="#3b4250" stroke="#555c68" />
        <path d="M18 2A16 16 0 0 1 32 26" fill="none" stroke="#3fc0b0" stroke-width="1.200" />
        <path d="M32 26A16 16 0 0 1 7 30" fill="none" stroke="#d8a050" stroke-width="1.200" />
      </svg>
      <span class="pct">74<small>%</small></span>
    </div>
  </div>
</div>

<style>
  :global(body) {
    margin: 0;
    background: #2d3052;
  }

  .app {
    position: relative;
    width: 1184px;
    height: 640px;
    overflow: hidden;
    display: flex;
    flex-direction: column;
    background: linear-gradient(#50547a, #363a5e 4%, #2d3052 6%, #343a66 40%, #2b3058);
    font: 8px "Liberation Sans", "Noto Sans CJK SC", sans-serif;
    color: #333;
  }

  .ic {
    display: block;
    flex: none;
  }

  .defs {
    position: absolute;
  }

  .titlebar {
    height: 25px;
    flex: none;
    display: flex;
    align-items: flex-start;
    background: linear-gradient(#4a4e74, #35395c 45%, #2d3153);
  }

  .quick {
    display: flex;
    align-items: center;
    gap: 3px;
    width: 42px;
    height: 19px;
    margin: 2px 3px 0 5px;
    padding-left: 3px;
    box-sizing: border-box;
    background: rgba(255, 255, 255, 0.06);
    border: 1px solid #4a4e70;
    border-radius: 3px;
  }

  .title {
    margin-top: 3px;
    color: #eceef6;
    font: 8px/10px "DejaVu Sans", "Noto Sans CJK SC", sans-serif;
    white-space: nowrap;
  }

  .title .gap {
    display: inline-block;
    width: 10px;
  }

  .head-right {
    margin-left: auto;
    display: flex;
    align-items: center;
    gap: 13px;
    padding: 5px 3px 0 0;
  }

  .winbtns {
    display: flex;
    gap: 2px;
    margin-top: -2px;
    margin-left: 6px;
  }

  .winbtns span {
    width: 18px;
    height: 10px;
    border: 1px solid #4c5070;
    border-radius: 2px;
    color: #7a7e98;
    font-size: 8px;
    line-height: 10px;
    text-align: center;
    background: rgba(255, 255, 255, 0.05);
  }

  .client {
    flex: 1;
    margin: 0 3px 2px 4px;
    display: flex;
    flex-direction: column;
    min-height: 0;
    background: #c6d2e2;
    border-radius: 4px 4px 0 0;
  }

  .panes {
    display: flex;
    height: 489px;
    flex: none;
  }

  .pane {
    display: flex;
    flex-direction: column;
    background: #fff;
    min-width: 0;
  }

  .view-pane {
    width: 627px;
    margin-right: 2px;
  }

  .tree-pane {
    width: 228px;
    margin-right: 3px;
    border: 1px solid #a8b4c6;
    border-width: 0 1px 1px;
    box-sizing: border-box;
  }

  .code-pane {
    width: 316px;
    border: 1px solid #a8b4c6;
    border-width: 0 1px 1px;
    box-sizing: border-box;
  }

  .tabs {
    height: 19px;
    flex: none;
    display: flex;
    background: linear-gradient(#eff3f9, #d5deea);
    border-bottom: 1px solid #b8c2d0;
    box-sizing: border-box;
  }

  .tabs.wide {
    padding-left: 8px;
    background: linear-gradient(#e8ebf0, #d8dce4);
    border-radius: 4px 0 0 0;
  }

  .tab {
    width: 52.500px;
    display: flex;
    align-items: center;
    justify-content: center;
    background: linear-gradient(#f2f2f2, #dedede);
    border-right: 1px solid #c4c8cf;
    box-sizing: border-box;
  }

  .tab.on {
    background: linear-gradient(#f4fbff, #e9f2f8);
    margin-bottom: -1px;
    height: 19px;
    border-right: 1px solid #c9d3e0;
  }

  .tab.mid {
    width: 30px;
    margin-left: 8px;
  }

  .tab.mid2 {
    width: 30px;
    margin-left: 8px;
  }

  .tab-icons {
    display: flex;
    align-items: center;
    gap: 4px;
    margin-left: 18px;
  }

  .tab-icons.b2 {
    gap: 3px;
    margin-left: 18px;
  }

  .view-tools {
    height: 20px;
    flex: none;
    display: flex;
    align-items: center;
    padding-left: 6px;
    background: linear-gradient(#fafbfd, #e6ebf2);
    border-bottom: 1px solid #c0c9d6;
    box-sizing: border-box;
  }

  .vt {
    width: 20px;
    height: 16px;
    display: flex;
    align-items: center;
    justify-content: center;
    box-sizing: border-box;
  }

  .vt.on {
    width: 16px;
    margin: 0 2px 0 -1px;
    background: #fdecc0;
    border: 1px solid #eba63c;
    border-radius: 3px;
  }

  .caret {
    width: 0;
    height: 0;
    margin: 0 4px 0 0;
    border: 2.500px solid transparent;
    border-top: 3px solid #111;
    border-bottom: 0;
  }

  .viewport {
    position: relative;
    flex: 1;
    overflow: hidden;
  }

  .scene {
    display: block;
  }

  .ax {
    font: 9px "DejaVu Sans", sans-serif;
  }

  .tri {
    font: 7px "DejaVu Sans", sans-serif;
  }

  .tag {
    position: absolute;
    width: 19px;
    height: 13px;
    box-sizing: border-box;
    background: #ee5f80;
    border: 1px solid #5a3436;
    color: #3a2230;
    font: 7.500px/11px "DejaVu Sans", sans-serif;
    text-align: center;
    letter-spacing: -0.3px;
  }

  .tip {
    position: absolute;
    width: 48px;
    height: 22px;
    box-sizing: border-box;
    background: #fffff2;
    border: 1px solid #333;
    border-radius: 5px;
    color: #444;
    font: 7.500px/20px "DejaVu Sans", sans-serif;
    text-align: center;
  }

  .tip.wide-tip {
    width: 54px;
  }

  .tip i {
    position: absolute;
    left: 10px;
    top: -9px;
    width: 0;
    height: 0;
    border-left: 8px solid #fffff2;
    border-top: 9px solid transparent;
  }

  .pick {
    position: absolute;
    left: 2px;
    top: 1px;
    width: 21px;
    height: 188px;
    box-sizing: border-box;
    background: #fff;
    border: 1px solid #97abc6;
    display: flex;
    flex-direction: column;
    align-items: center;
  }

  .pick-pin {
    height: 15px;
    display: flex;
    align-items: center;
    margin-left: 8px;
  }

  .pt {
    width: 17px;
    height: 18px;
    margin-bottom: 1.500px;
    display: flex;
    align-items: center;
    justify-content: center;
    box-sizing: border-box;
  }

  .pt.on {
    background: #fdecc0;
    border: 1px solid #eba63c;
    border-radius: 3px;
  }

  .tree-head {
    height: 12px;
    flex: none;
    position: relative;
    background: linear-gradient(#fbfcfe, #eef1f6);
    border-bottom: 2px solid #d6c28e;
    box-sizing: border-box;
    font-size: 8px;
    line-height: 11px;
  }

  .h-id {
    position: absolute;
    left: 3px;
  }

  .h-th {
    position: absolute;
    left: 66px;
  }

  .h-ac {
    position: absolute;
    left: 170px;
  }

  .tree {
    position: relative;
    flex: 1;
    overflow: hidden;
  }

  .wm {
    position: absolute;
    left: 0;
    top: 0;
  }

  .wm-t {
    font: bold 16px "Liberation Sans", sans-serif;
    fill: rgba(90, 90, 90, 0.04);
  }

  .row {
    position: relative;
    display: flex;
    height: 11.100px;
    line-height: 11px;
    white-space: nowrap;
    margin-right: 6px;
  }

  .id {
    width: 14px;
    text-align: center;
    color: #222;
  }

  .glyph {
    position: relative;
    width: 20px;
  }

  .glyph :global(.ic) {
    position: absolute;
    left: 7px;
    top: 1px;
  }

  .box {
    position: absolute;
    left: -3px;
    top: 3px;
    width: 5px;
    height: 5px;
    border: 1px solid #888;
    background: linear-gradient(#888, #888) center / 3px 1px no-repeat;
  }

  .dash {
    position: absolute;
    left: 1px;
    top: 5px;
    width: 6px;
    height: 1px;
    background: #999;
  }

  .ell {
    position: absolute;
    left: 10px;
    top: 0;
    width: 5px;
    height: 5px;
    border: solid #bbb;
    border-width: 0 0 1px 1px;
  }

  .cadmark {
    position: absolute;
    left: 3px;
    top: 0;
    color: #2a5a9a;
    font: bold 5.500px/11px "Liberation Sans", sans-serif;
  }

  .nm {
    width: 89px;
    color: #333;
  }

  .ac {
    flex: 1;
    padding-left: 2px;
    color: #333;
  }

  .leaf .nm {
    color: #8c8caa;
  }

  .leaf .ac {
    color: #2f9a3a;
  }

  .leaf:nth-last-child(2) .nm {
    color: #444;
  }

  .leaf:nth-last-child(2) .ac {
    color: #333;
  }

  .row.picked {
    background: #fdd36f;
  }

  .row.picked .id,
  .row.picked .nm,
  .row.picked .ac {
    color: #a39c78;
  }

  .picked .ell {
    border-color: #c8a860;
  }

  .row.cur .id,
  .row.cur .nm,
  .row.cur .ac {
    color: #2a2410;
  }

  .row.cur .ac {
    background: #fcc452;
  }

  .code-tools {
    height: 16px;
    flex: none;
    display: flex;
    align-items: center;
    gap: 5.300px;
    padding-left: 3px;
    background: linear-gradient(#fbfcfe, #edf1f6);
  }

  .code-body {
    flex: 1;
    display: flex;
    min-height: 0;
  }

  .strip {
    width: 20px;
    flex: none;
    display: flex;
    flex-direction: column;
    align-items: center;
    padding-top: 1px;
    background: #eef1f6;
  }

  .strip hr {
    width: 16px;
    height: 0;
    margin: 2px 0 1px;
    border: 0;
    border-top: 1px solid #aab;
  }

  .st {
    width: 16px;
    height: 15px;
    margin-bottom: 2.400px;
    display: flex;
    align-items: center;
    justify-content: center;
    box-sizing: border-box;
  }

  .st.on {
    background: #fdecc0;
    border: 1px solid #eba63c;
    border-radius: 3px;
  }

  .code-main {
    flex: 1;
    display: flex;
    flex-direction: column;
    min-width: 0;
  }

  .code-view {
    height: 441px;
    display: flex;
    font: 8.250px/8px "Liberation Mono", "Noto Sans CJK SC", monospace;
  }

  .nums {
    width: 21px;
    flex: none;
    color: #aaa;
    text-align: right;
  }

  .nums div {
    height: 8px;
  }

  .nums .last {
    position: relative;
  }

  .nums .last svg {
    position: absolute;
    left: 1px;
    top: 0;
  }

  .lines {
    flex: 1;
    min-width: 0;
    overflow: hidden;
    background: #cbd5f2;
    white-space: nowrap;
    height: 440px;
  }

  .ln {
    height: 8px;
  }

  .cursor-line {
    background: #007a00;
  }

  .k {
    color: #222;
  }

  .t {
    color: #2a7f8c;
  }

  .b {
    color: #111;
    font-weight: bold;
  }

  .s {
    color: #1a1ad0;
  }

  .c {
    color: #1a1ad0;
    font-size: 8px;
    letter-spacing: 2px;
  }

  .c2 {
    color: #1fa030;
    font-size: 8px;
    letter-spacing: 2px;
  }

  .a {
    color: #1fa030;
  }

  .n {
    color: #8c2348;
  }

  .vbar {
    position: relative;
    width: 11px;
    flex: none;
    background: #f2f2f2;
  }

  .thumb {
    position: absolute;
    left: 1px;
    top: 367px;
    width: 9px;
    height: 65px;
    background: #c6c6c6;
  }

  .up,
  .dn {
    position: absolute;
    left: 3px;
    width: 3px;
    height: 3px;
    border: solid #333;
    border-width: 1.500px 0 0 1.500px;
    transform: rotate(45deg);
  }

  .up {
    top: 5px;
  }

  .dn {
    top: 434px;
    transform: rotate(225deg);
  }

  .hbar {
    position: relative;
    flex: 1;
    margin-top: 2px;
    background: #f0f0f0;
    display: flex;
    align-items: center;
    color: #333;
    font: bold 9px/9px "Liberation Sans", sans-serif;
  }

  .lt {
    margin-left: 3px;
  }

  .hthumb {
    height: 9px;
    width: 136px;
    margin-left: 3px;
    background: #c9c9c9;
  }

  .rt {
    margin-left: auto;
    margin-right: 14px;
  }

  .lower {
    display: flex;
    height: 106px;
    flex: none;
    margin-top: 2px;
    gap: 2px;
  }

  .mode-panel {
    width: 61px;
    margin-left: 2px;
    background: linear-gradient(#dfeaf8 0, #eef5fc 8px, #fff 10px);
    border-radius: 2px;
    flex: none;
    padding: 10px 0 0 4px;
    box-sizing: border-box;
  }

  .mode-grid {
    display: grid;
    grid-template-columns: 24px 24px;
    grid-auto-rows: 25px;
    gap: 4px 5px;
  }

  .mb {
    display: flex;
    align-items: center;
    justify-content: center;
    background: #e0e0e3;
    border-radius: 4px;
    box-shadow: inset 0 0 0 1px #d0d0d4;
  }

  .mb.on {
    background: #fcd98c;
    box-shadow: inset 0 0 0 1px #e8a63c;
  }

  .tol-panel {
    width: 940px;
    flex: none;
    background: #fff;
    border-radius: 2px;
    display: flex;
    flex-direction: column;
  }

  .gdt-bar {
    height: 20px;
    flex: none;
    display: flex;
    align-items: center;
    gap: 1.500px;
    padding-left: 2px;
    background: linear-gradient(#dbe9fa, #fafcff);
    border-bottom: 1px solid #dde3ec;
  }

  .g {
    width: 17px;
    height: 17px;
    display: flex;
    align-items: center;
    justify-content: center;
    box-sizing: border-box;
  }

  .g.on {
    background: #fcd98c;
    border: 1px solid #e8a63c;
    border-radius: 2px;
  }

  .r-sym {
    color: #6c6a58;
    font: 13px/16px "Liberation Sans", sans-serif;
  }

  .tol-form {
    flex: 1;
    display: flex;
    padding-bottom: 4px;
  }

  .sec {
    display: grid;
    border-right: 1px solid #dfe3ea;
    box-sizing: border-box;
    align-items: center;
    line-height: 10px;
  }

  .sec-a {
    width: 102px;
    padding: 4px 7px 0 6px;
    grid-template-columns: 35px 54px;
    grid-template-rows: 14px 14px 14px 14px 15px;
  }

  .wide {
    grid-column: 1 / span 2;
  }

  .spacer {
    grid-column: 1 / span 2;
  }

  .accept {
    grid-column: 2;
    margin-left: -1px;
    margin-right: -1px;
  }

  .sec-b {
    width: 245px;
    padding: 18px 7px 0 11px;
    grid-template-columns: 54px 61px 50px 61px;
    grid-auto-rows: 14px;
    align-content: start;
    column-gap: 0;
  }

  .sec-b .lb:nth-child(3),
  .sec-b .lb:nth-child(7) {
    padding-left: 4px;
  }

  .sec-c {
    border: 0;
    padding: 18px 0 0 5px;
    grid-template-columns: 33px 8px 52px;
    grid-auto-rows: 14px;
    align-content: start;
    column-gap: 0;
    align-items: center;
  }

  .lb {
    white-space: nowrap;
    color: #333;
  }

  .fld {
    position: relative;
    display: block;
    height: 12px;
    box-sizing: border-box;
    padding-left: 3px;
    border: 1px solid #a8c4dc;
    border-radius: 2px;
    background: #fff;
    line-height: 10px;
    color: #333;
    white-space: nowrap;
  }

  .fld.blue {
    background: #d4e6fa;
  }

  .fld.dim {
    color: #999;
  }

  .dd {
    position: absolute;
    right: 4px;
    top: 3.500px;
    width: 0;
    height: 0;
    border: 3px solid transparent;
    border-top: 3.500px solid #1a3a70;
    border-bottom: 0;
  }

  .dd.grey {
    border-top-color: #9aa8b8;
  }

  .btn {
    display: block;
    height: 12px;
    box-sizing: border-box;
    border: 1px solid #7f9ab6;
    border-radius: 2px;
    background: linear-gradient(#fff, #dbe2ea);
    line-height: 10px;
    text-align: center;
    color: #333;
  }

  .btn.off {
    color: #999;
  }

  .probe-panel {
    flex: 1;
    display: flex;
    background: #fff;
    border-radius: 2px;
    min-width: 0;
  }

  .probe-form {
    flex: 1;
    display: grid;
    grid-template-columns: 17px 72px 52px;
    grid-auto-rows: 15px;
    align-items: center;
    align-content: start;
    padding: 7px 0 0 4px;
  }

  .probe-form .small {
    margin-right: 10px;
  }

  .apply {
    margin-left: 20px;
    margin-top: 1px;
  }

  .probe-side {
    width: 13px;
    flex: none;
    margin-right: 1px;
    display: flex;
    flex-direction: column;
    align-items: center;
    gap: 5px;
    padding-top: 4px;
    background: #eef2f7;
  }

  .side-on {
    background: #fff;
    border: 1px solid #a8d0e8;
    padding: 1px 0;
  }

  .mini {
    font-size: 5px;
    line-height: 5px;
    color: #123;
    margin-top: -3px;
    white-space: nowrap;
    letter-spacing: -1px;
  }

  .status {
    flex: 1;
    display: flex;
    align-items: center;
    background: linear-gradient(#eaf2fc, #a3c3ec);
    margin-top: 1px;
    padding-left: 3px;
  }

  .ready {
    color: #222;
  }

  .st-right {
    margin-left: auto;
    display: flex;
    align-items: center;
    gap: 9px;
    padding-right: 2px;
  }

  .unit {
    width: 52px;
    border-color: #b0c8de;
  }

  .unit.short {
    width: 40px;
  }

  .st-icons {
    display: flex;
    gap: 3px;
    margin-left: 2px;
  }

  .csdn {
    position: absolute;
    left: 1018px;
    top: 624px;
    color: rgba(255, 255, 255, 0.55);
    font-size: 9px;
    white-space: nowrap;
  }

  .ime {
    position: absolute;
    left: 755px;
    top: 627px;
    width: 111px;
    height: 13px;
    box-sizing: border-box;
    padding-left: 3px;
    display: flex;
    align-items: center;
    gap: 3px;
    background: #fff;
  }

  .sogou {
    position: absolute;
    left: -16px;
    top: -2px;
    width: 16px;
    height: 15px;
    background: #ee5a24;
    border-radius: 3px;
    color: #fff;
    font: bold 13px/15px "Liberation Sans", sans-serif;
    text-align: center;
  }

  .zh {
    color: #1c6fc8;
    font: bold 10px/12px "Noto Sans CJK SC", sans-serif;
  }

  .pn {
    width: 8px;
    color: #1c6fc8;
    font: bold 9px/10px "Liberation Sans", sans-serif;
  }

  .meter {
    position: absolute;
    left: 854px;
    top: 600px;
    width: 74px;
    height: 36px;
  }

  .dial {
    position: absolute;
    left: 0;
    top: 0;
  }

  .dial svg {
    display: block;
  }

  .pct {
    position: absolute;
    left: 7px;
    top: 7px;
    color: #d0d4dc;
    font: 15px/20px "Liberation Sans", sans-serif;
    white-space: nowrap;
  }

  .pct small {
    font-size: 6px;
  }

  .pill {
    position: absolute;
    left: 24px;
    top: 6px;
    width: 50px;
    height: 26px;
    box-sizing: border-box;
    padding: 3px 0 0 16px;
    background: #333946;
    border-radius: 0 13px 13px 0;
    color: #e0e4ea;
    line-height: 10px;
    white-space: nowrap;
  }

  .pill div {
    position: relative;
    height: 11px;
    margin-bottom: 2px;
  }

  .pill b {
    font-size: 8px;
  }

  .pill small {
    margin-left: 1px;
    font-size: 5px;
    color: #889;
  }

  .up-dot,
  .dn-dot {
    position: absolute;
    left: -6px;
    top: 3px;
    width: 3px;
    height: 3px;
    border-radius: 50%;
    background: #4ab0e0;
  }

  .dn-dot {
    background: #30c050;
  }
</style>
